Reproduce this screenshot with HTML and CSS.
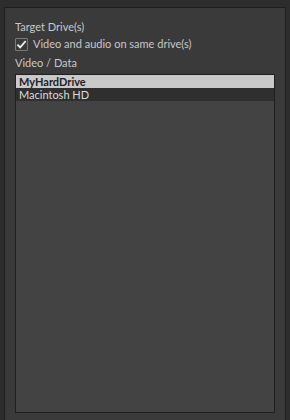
FILE: index.html
```html
<!DOCTYPE html>
<html lang="en">
<head>
  <meta charset="UTF-8" />
  <title>Target Drives</title>
  <link rel="stylesheet" href="styles.css">
</head>
<body>
  <div class="panel">
    <div class="label">Target Drive(s)</div>

    <label class="check-row">
      <span class="checkbox">
        <svg width="11" height="11" viewBox="0 0 11 11">
          <path d="M1.4 5.6 L4.2 8.4 L9.7 2" fill="none" stroke="#f2f2f2" stroke-width="1.8"/>
        </svg>
      </span>
      <span>Video and audio on same drive(s)</span>
    </label>

    <div class="label label-list">Video / Data</div>

    <ul class="drive-list">
      <li class="drive selected">MyHardDrive</li>
      <li class="drive">Macintosh HD</li>
    </ul>
  </div>
</body>
</html>
```

FILE: styles.css
```css
* {
  margin: 0;
  padding: 0;
  box-sizing: border-box;
}

body {
  font-family: Lato, 'Open Sans', sans-serif;
  font-size: 11px;
  background-color: #2d2d2d;
  color: #c8c8c8;
  height: 420px;
  overflow: hidden;
  padding: 7px 4px 0;
}

.panel {
  background-color: #3a3a3a;
  border: 1px solid #1e1e1e;
  border-bottom: none;
  height: 413px;
  padding: 12px 10px 0;
  display: flex;
  flex-direction: column;
}

.label {
  line-height: 14px;
}

.check-row {
  display: flex;
  align-items: center;
  gap: 5px;
  margin-top: 3px;
  height: 14px;
  line-height: 14px;
}

.checkbox {
  width: 13px;
  height: 13px;
  border: 1px solid #7a7a7a;
  border-radius: 1px;
  background-color: #3a3a3a;
  display: flex;
  align-items: center;
  justify-content: center;
}

.label-list {
  margin-top: 5px;
}

.drive-list {
  list-style: none;
  margin-top: 4px;
  height: 339px;
  border: 1px solid #1f1f1f;
  background-color: #434343;
}

.drive {
  height: 13px;
  line-height: 13px;
  padding-left: 3px;
  background-color: #2f2f2f;
  color: #dcdcdc;
}

.drive.selected {
  background-color: #c9c9c9;
  color: #222;
  font-weight: 700;
}
```
